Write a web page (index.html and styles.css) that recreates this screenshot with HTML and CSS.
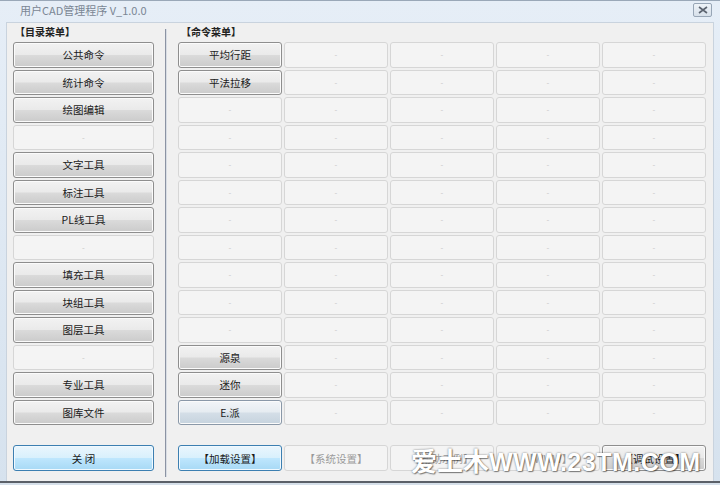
FILE: index.html
```html
<!DOCTYPE html>
<html>
<head>
<meta charset="utf-8">
<link rel="stylesheet" href="styles.css">
</head>
<body>
<div class="window">
  <div class="titlebar">
    <span class="title">用户CAD管理程序 V_1.0.0</span>
    <span class="xbtn"><svg width="12" height="8" viewBox="0 0 12 8"><path d="M2 1 L10 7 M10 1 L2 7" stroke="#5c6470" stroke-width="1.6"/></svg></span>
  </div>
  <div class="client">
    <div class="left">
      <div class="label">【目录菜单】</div>
      <div class="col-list">
        <div class="btn">公共命令</div>
        <div class="btn">统计命令</div>
        <div class="btn">绘图编辑</div>
        <div class="btn blank">-</div>
        <div class="btn">文字工具</div>
        <div class="btn">标注工具</div>
        <div class="btn">PL线工具</div>
        <div class="btn blank">-</div>
        <div class="btn">填充工具</div>
        <div class="btn">块组工具</div>
        <div class="btn">图层工具</div>
        <div class="btn blank">-</div>
        <div class="btn">专业工具</div>
        <div class="btn">图库文件</div>
      </div>
      <div class="bottom-left">
        <div class="btn blue">关 闭</div>
      </div>
    </div>
    <div class="sep"></div>
    <div class="right">
      <div class="label">【命令菜单】</div>
      <div class="grid" id="grid"></div>
      <div class="bottom-row">
        <div class="btn blue">【加载设置】</div>
        <div class="btn disabled">【系统设置】</div>
        <div class="btn disabled">【帮助示例】</div>
        <div class="btn disabled">【WWW】</div>
        <div class="btn">【调试设置】</div>
      </div>
    </div>
  </div>
  <div class="bottom-frame"></div>
  <div class="watermark"><span class="wm-cjk">爱土木</span>WWW.23TM.COM</div>
</div>
<script>
  var first = {0: "平均行距", 5: "平法拉移", 55: "源泉", 60: "迷你", 65: "E.派"};
  var g = document.getElementById("grid");
  for (var i = 0; i < 70; i++) {
    var d = document.createElement("div");
    if (first[i]) {
      d.className = "btn" + (i === 65 ? " steel" : "");
      d.textContent = first[i];
    } else {
      d.className = "btn blank";
      d.textContent = "-";
    }
    g.appendChild(d);
  }
</script>
</body>
</html>
```
FILE: styles.css
```css
* { box-sizing: border-box; }
html, body {
  margin: 0;
  padding: 0;
}
body {
  width: 720px;
  height: 485px;
  overflow: hidden;
  font-family: "Noto Sans CJK SC", "Liberation Sans", sans-serif;
  font-size: 11px;
  color: #1e1e1e;
}
.window {
  position: relative;
  width: 720px;
  height: 485px;
  background: linear-gradient(#e6eef7, #d6e2ee);
  display: flex;
  flex-direction: column;
}
.titlebar {
  height: 22px;
  display: flex;
  align-items: center;
  justify-content: space-between;
  padding: 0 8px 0 20px;
  border-top: 1px solid #9aa8b8;
}
.title {
  font-size: 11px;
  color: #7a8694;
  margin-top: -3px;
}
.xbtn {
  width: 19px;
  height: 14px;
  border: 1px solid #98a6b6;
  border-radius: 2px;
  background: linear-gradient(#eef3f8, #d7e0ea);
  display: flex;
  align-items: center;
  justify-content: center;
  margin-top: -3px;
}
.client {
  flex: 1;
  margin: 0 6px;
  background: #f0f0f0;
  border: 1px solid #c9d3de;
  border-bottom: none;
  display: flex;
  padding: 0 7px 0 6px;
}
.left {
  width: 141px;
  display: flex;
  flex-direction: column;
}
.label {
  height: 19px;
  line-height: 18px;
  font-size: 10px;
  font-weight: bold;
  color: #222;
  padding-left: 2px;
}
.right .label { padding-left: 3px; }
.col-list {
  display: grid;
  grid-template-rows: repeat(14, 25.5px);
  row-gap: 2px;
}
.bottom-left {
  margin-top: 20px;
}
.sep {
  width: 2px;
  margin: 6px 11px 4px 11px;
  background: #8b93a3;
  border-right: 1px solid #d8dde4;
}
.right {
  width: 528px;
  display: flex;
  flex-direction: column;
}
.grid {
  display: grid;
  grid-template-columns: repeat(5, 104px);
  grid-template-rows: repeat(14, 25.5px);
  column-gap: 2px;
  row-gap: 2px;
}
.bottom-row {
  margin-top: 20px;
  display: grid;
  grid-template-columns: repeat(5, 104px);
  column-gap: 2px;
}
.btn {
  height: 25.5px;
  border: 1px solid #8e8e8e;
  border-radius: 3px;
  background: linear-gradient(#f2f2f2 0%, #eaeaea 48%, #dadada 52%, #cbcbcb 100%);
  display: flex;
  align-items: center;
  justify-content: center;
  font-size: 10.5px;
  color: #1a1a1a;
  box-shadow: inset 0 0 0 1px #fbfbfb;
}
.bottom-left .btn, .bottom-row .btn { height: 26px; }
.btn.blank {
  background: #f4f4f4;
  border-color: #d6d6d6;
  color: #c6c6c6;
  font-size: 8px;
  box-shadow: none;
}
.btn.disabled {
  background: #f4f4f4;
  border-color: #d6d6d6;
  color: #9a9a9a;
  box-shadow: none;
}
.btn.blue {
  border-color: #3c7fb1;
  background: linear-gradient(#eaf6fd 0%, #d9f0fc 48%, #bee6fd 52%, #a7d9f5 100%);
  box-shadow: inset 0 0 0 1px #f0f9ff;
}
.btn.steel {
  border-color: #8a98a8;
  background: linear-gradient(#f2f5f8 0%, #e6ecf1 48%, #d4dee7 52%, #c6d3de 100%);
}
.bottom-frame {
  height: 4px;
  margin: 0;
  border-top: 2px solid #5b6068;
  background: #d6e0ea;
}
.watermark {
  position: absolute;
  left: 411px;
  top: 441px;
  font-family: "Liberation Sans", "Noto Sans CJK SC", sans-serif;
  font-size: 25px;
  font-weight: bold;
  color: #ffffff;
  letter-spacing: 0.5px;
  text-shadow: 0 0 2px rgba(0,0,0,0.55), 1px 1px 1px rgba(0,0,0,0.4);
  white-space: nowrap;
}
.wm-cjk {
  font-family: "Noto Sans CJK SC", sans-serif;
  font-size: 26px;
  letter-spacing: 0;
}
```
